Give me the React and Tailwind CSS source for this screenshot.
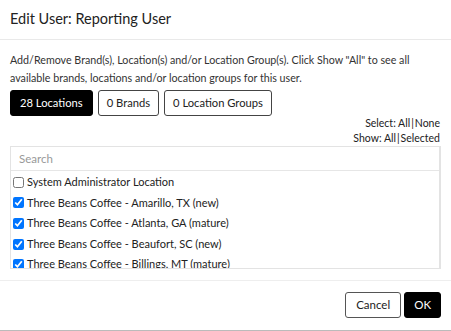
import React from 'react';

const locations = [
  { name: 'System Administrator Location', checked: false },
  { name: 'Three Beans Coffee - Amarillo, TX (new)', checked: true },
  { name: 'Three Beans Coffee - Atlanta, GA (mature)', checked: true },
  { name: 'Three Beans Coffee - Beaufort, SC (new)', checked: true },
  { name: 'Three Beans Coffee - Billings, MT (mature)', checked: true },
];

const App = () => {
  return (
    <div className="w-[451px] h-[331px] bg-white text-[#222] overflow-hidden font-['Lato','Liberation_Sans',sans-serif] border-b border-[#bbb] flex flex-col">
      {/* Header */}
      <div className="h-[40px] px-[10px] flex items-center border-b border-[#e9e9e9]">
        <h1 className="text-[14.5px] leading-none">Edit User: Reporting User</h1>
      </div>

      {/* Body */}
      <div className="px-[10px] pt-[11px] flex-1">
        <p className="text-[10.7px] leading-[18px] text-[#333]">
          Add/Remove Brand(s), Location(s) and/or Location Group(s). Click Show "All" to see all available brands, locations and/or location groups for this user.
        </p>

        <div className="flex gap-[5px] mt-[3px]">
          <button className="h-[26px] px-[9px] rounded-[3px] bg-black text-white text-[11.2px] border border-black">28 Locations</button>
          <button className="h-[26px] px-[8px] rounded-[3px] bg-white text-[#222] text-[11.2px] border border-[#444]">0 Brands</button>
          <button className="h-[26px] px-[8px] rounded-[3px] bg-white text-[#222] text-[11.2px] border border-[#444]">0 Location Groups</button>
        </div>

        <div className="flex flex-col items-end text-[10.5px] leading-[15px] pr-[1px]">
          <span>Select: All<span className="mx-[1px]">|</span>None</span>
          <span>Show: All<span className="mx-[1px]">|</span>Selected</span>
        </div>

        <div className="h-[123px] border border-[#e3e3e3] border-r-2 border-r-[#e3e3e3] overflow-hidden">
          <div className="h-[24px] border-b border-[#e6e6e6] flex items-center px-[8px]">
            <span className="text-[11.5px] text-[#999]">Search</span>
          </div>
          <ul className="pt-[1px]">
            {locations.map((loc) => (
              <li key={loc.name} className="h-[20.6px] flex items-center gap-[3px] pl-[2px] text-[11px] text-[#222]">
                <input type="checkbox" defaultChecked={loc.checked} className="w-[11px] h-[11px] m-0" />
                <span>{loc.name}</span>
              </li>
            ))}
          </ul>
        </div>
      </div>

      {/* Footer */}
      <div className="h-[50px] border-t border-[#eee] flex items-center justify-end gap-[3px] px-[10px] pb-[1px]">
        <button className="h-[26px] px-[10px] rounded-[3px] bg-white border border-[#555] text-[11.5px]">Cancel</button>
        <button className="h-[26px] px-[9px] rounded-[3px] bg-black border border-black text-white text-[11.5px]">OK</button>
      </div>
    </div>
  );
};

export default App;
